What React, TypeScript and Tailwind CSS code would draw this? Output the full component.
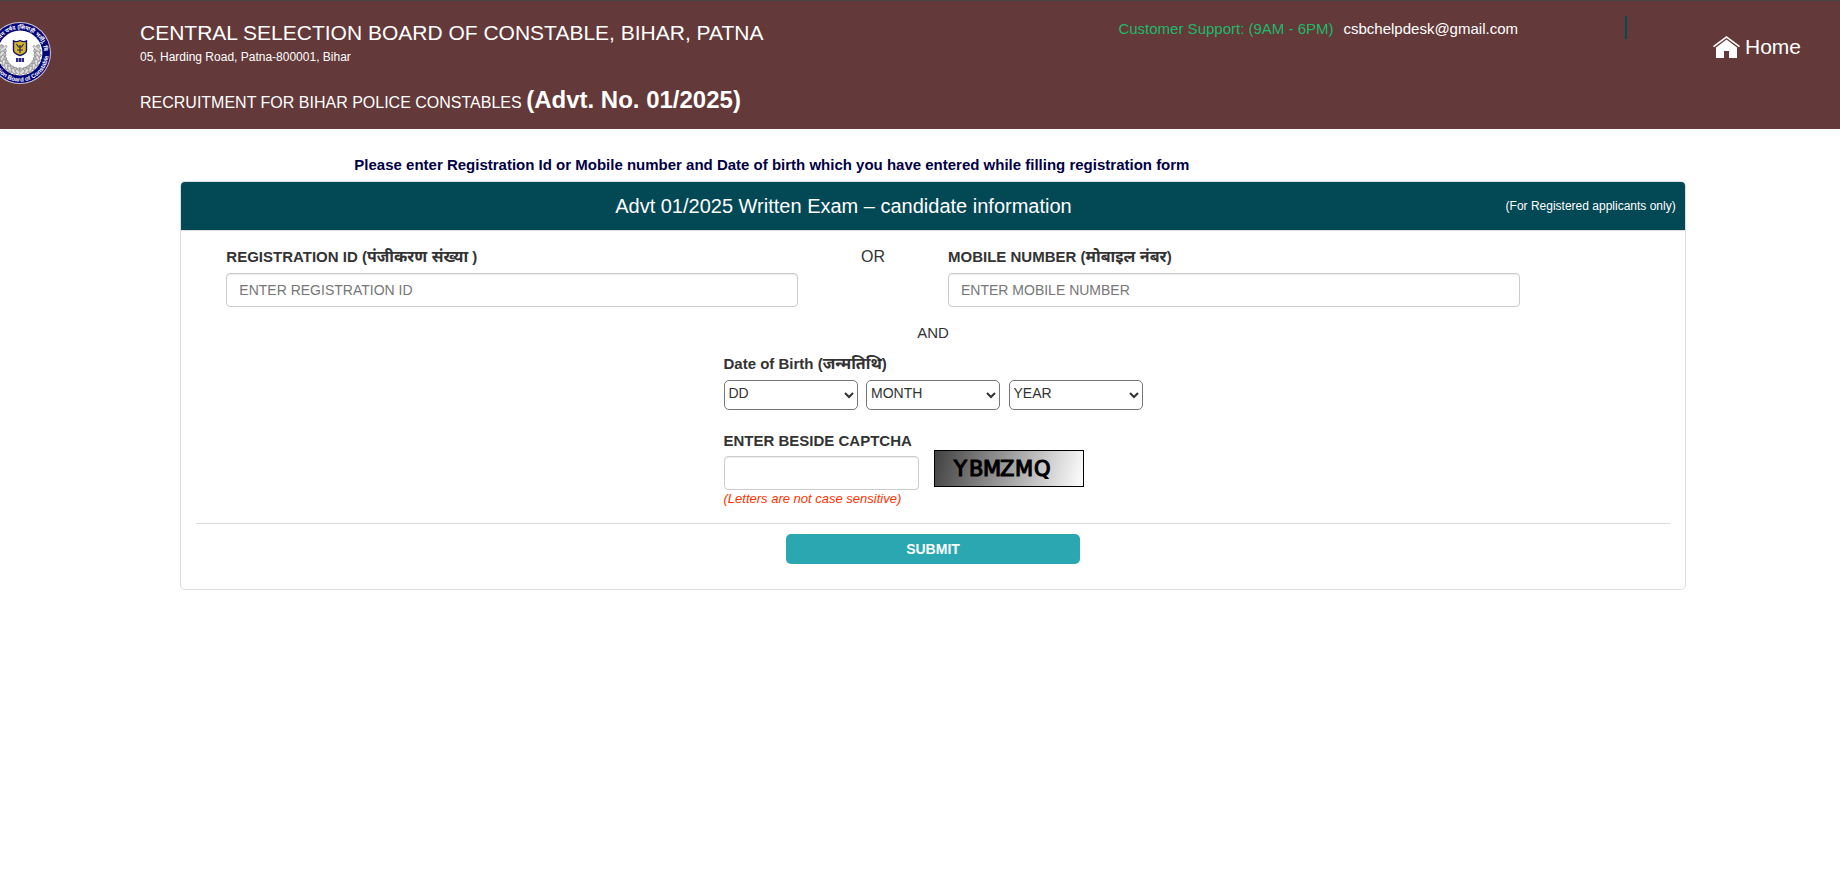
import { useState } from "react";
import type { ReactNode } from "react";

const MONTHS = ["JANUARY", "FEBRUARY", "MARCH", "APRIL", "MAY", "JUNE", "JULY", "AUGUST", "SEPTEMBER", "OCTOBER", "NOVEMBER", "DECEMBER"];
const DAYS = Array.from({ length: 31 }, (_, i) => String(i + 1));
const YEARS = Array.from({ length: 40 }, (_, i) => String(2007 - i));

const LEAVES = [0, 1, 2, 3, 4, 5, 6, 7];

function Emblem() {
  return (
    <svg viewBox="0 0 62 62" className="size-[62px] shrink-0" role="img" aria-label="Board emblem">
      <defs>
        <path id="ring-top" d="M 7 31 A 24 24 0 0 1 55 31" />
        <path id="ring-bottom" d="M 2.4 31 A 28.6 28.6 0 0 0 59.6 31" />
      </defs>
      <circle cx="31" cy="31" r="31" fill="#c9c6d4" />
      <circle cx="31" cy="31" r="30" fill="#05057a" />
      <circle cx="31" cy="31" r="22.4" fill="#ffffff" />
      <g fill="#ffffff" fontWeight="700" textAnchor="middle">
        <text fontSize="5.5"><textPath href="#ring-top" startOffset="50%">केन्द्रीय चयन पर्षद (सिपाही भर्ती), बिहार</textPath></text>
        <text fontSize="6"><textPath href="#ring-bottom" startOffset="50%">Selection Board of Constable</textPath></text>
      </g>
      {[1, -1].map((side) => (
        <g key={side} transform={side === 1 ? undefined : "translate(62 0) scale(-1 1)"}>
          <path d="M31 51 C20 51 12 42 13.5 25" fill="none" stroke="#777" strokeWidth="1" />
          {LEAVES.map((i) => {
            const deg = 100 + i * 14;
            const a = (deg * Math.PI) / 180;
            const x = 31 + 17.5 * Math.cos(a);
            const y = 32 + 17.5 * Math.sin(a);
            return (
              <g key={i} transform={`translate(${x} ${y}) rotate(${deg})`}>
                <ellipse rx="4.6" ry="1.8" fill="#c2c2c2" stroke="#6f6f6f" strokeWidth="0.5" transform="rotate(40)" />
                <ellipse rx="4.6" ry="1.5" fill="#e0e0e0" stroke="#7d7d7d" strokeWidth="0.5" transform="rotate(125)" />
              </g>
            );
          })}
        </g>
      ))}
      <path d="M24.5 19 q3 1.5 6.5 -0.5 q3.5 2 6.5 0.5 v9 q0 3.5 -6.5 5.5 q-6.5 -2 -6.5 -5.5 z" fill="#d8b52c" stroke="#15156e" strokeWidth="1.4" />
      <path d="M27.5 22 l2 3 h3 l2 -3 M31 23 v8 M28 28 h6" fill="none" stroke="#2b2a55" strokeWidth="1.2" />
      <path d="M27 36 h8 v4 h-8 z" fill="#2a2a86" />
      <path d="M29.5 36 v4 M32.5 36 v4" stroke="#d5d5ea" strokeWidth="0.6" />
    </svg>
  );
}

function HomeIcon() {
  return (
    <svg viewBox="0 0 27 22" className="h-[22px] w-[27px]" fill="#ffffff" aria-hidden="true">
      <path d="M13.5 0 L27 10 L26 11.3 L13.5 1.9 L1 11.3 L0 10 Z" />
      <path d="M13.5 3.6 L24 11.4 V22 H16 V15 H11 V22 H3 V11.4 Z" />
    </svg>
  );
}

function CaptchaImage() {
  return (
    <svg viewBox="0 0 150 37" className="h-[37px] w-[150px]" role="img" aria-label="Captcha">
      <defs>
        <linearGradient id="captcha-shade" x1="0" y1="0" x2="146" y2="36" gradientUnits="userSpaceOnUse">
          <stop offset="0" stopColor="#404040" />
          <stop offset="1" stopColor="#fbfbfb" />
        </linearGradient>
      </defs>
      <rect x="0.5" y="0.5" width="149" height="36" fill="url(#captcha-shade)" stroke="#000000" />
      <g fontFamily="'DejaVu Sans', sans-serif" fontSize="21" fill="#000000" stroke="#000000" strokeWidth="1.2">
        <text x="20" y="26">Y</text>
        <text x="35" y="26">B</text>
        <text x="49" y="26">M</text>
        <text x="66" y="26">Z</text>
        <text x="81" y="26">M</text>
        <text x="100" y="26">Q</text>
      </g>
    </svg>
  );
}

function TextField({ id, label, placeholder }: { id: string; label: ReactNode; placeholder: string }) {
  const [value, setValue] = useState("");
  return (
    <div className="flex flex-col gap-1.5">
      <label htmlFor={id} className="text-[15px] leading-[21px] font-bold">{label}</label>
      <input
        id={id}
        type="text"
        value={value}
        onChange={(e) => setValue(e.target.value)}
        placeholder={placeholder}
        className="h-[34px] w-full rounded-sm border border-[#cccccc] bg-white px-3 text-[14px] shadow-[inset_0_1px_1px_rgba(0,0,0,0.075)] placeholder:text-[#777777]"
      />
    </div>
  );
}

function DateSelect({ label, options }: { label: string; options: string[] }) {
  return (
    <select
      aria-label={label}
      defaultValue=""
      className="h-[30px] w-[134px] rounded-[5px] border border-[#767676] bg-white pb-1 text-[14px]"
    >
      <option value="">{label}</option>
      {options.map((o) => (
        <option key={o} value={o}>{o}</option>
      ))}
    </select>
  );
}

export default function App() {
  return (
    <div className="font-['Liberation_Sans','Noto_Sans',sans-serif] text-[#333333]">
      <header className="flex items-start border-t border-[#444444] bg-[#633939] pr-[39px] pb-2.5 text-white">
        <div className="-ml-[11px] w-[151px] shrink-0 pt-[21px]">
          <Emblem />
        </div>
        <div className="grow pt-[18px]">
          <h1 className="text-[21px] leading-7">CENTRAL SELECTION BOARD OF CONSTABLE, BIHAR, PATNA</h1>
          <p className="text-[12px] leading-5">05, Harding Road, Patna-800001, Bihar</p>
          <h2 className="mt-[17px] text-[16px] leading-8">
            RECRUITMENT FOR BIHAR POLICE CONSTABLES <b className="text-[24px]">(Advt. No. 01/2025)</b>
          </h2>
        </div>
        <p className="flex gap-2.5 pt-[18px] text-[15px] leading-5">
          <span className="text-[#1fb86c]">Customer Support: (9AM - 6PM)</span>
          <a href="mailto:csbchelpdesk@gmail.com">csbchelpdesk@gmail.com</a>
        </p>
        <div className="mt-[15px] ml-[107px] h-[23px] w-0.5 bg-[#034a57]" />
        <a href="#home" className="mt-[34px] ml-[86px] flex items-center gap-[5px] text-[21px] leading-6">
          <HomeIcon />
          Home
        </a>
      </header>

      <main className="mx-[8.3333%] pt-[26px] pr-px pl-[27px]">
        <p className="pl-[174px] text-[15px] leading-5 font-bold text-[#000044]">
          Please enter Registration Id or Mobile number and Date of birth which you have entered while filling registration form
        </p>
        <form onSubmit={(e) => e.preventDefault()} className="mt-1.5 rounded-[5px] border border-[#dddddd] pb-[25px]">
          <div className="flex h-[49px] items-center rounded-t-[4px] border-b border-[#dddddd] bg-[#034855] text-white">
            <h3 className="grow text-center text-[20px]">Advt 01/2025 Written Exam – candidate information</h3>
            <span className="pr-[9px] text-[12px]">(For Registered applicants only)</span>
          </div>

          <div className="grid grid-cols-[1fr_150px_1fr] pt-[15px] pr-[165px] pl-[45px]">
            <TextField
              id="registration"
              label={<>REGISTRATION ID (<span className="text-[16px]">पंजीकरण संख्या</span> )</>}
              placeholder="ENTER REGISTRATION ID"
            />
            <span className="text-center text-[16px] leading-[21px]">OR</span>
            <TextField
              id="mobile"
              label={<>MOBILE NUMBER (<span className="text-[16px]">मोबाइल नंबर</span>)</>}
              placeholder="ENTER MOBILE NUMBER"
            />
          </div>

          <p className="pt-4 text-center text-[15px] leading-5">AND</p>

          <div className="mx-auto w-[419px]">
            <fieldset className="mt-2.5">
              <legend className="text-[15px] leading-[21px] font-bold">
                Date of Birth (<span className="text-[16px]">जन्मतिथि</span>)
              </legend>
              <div className="mt-1.5 flex justify-between">
                <DateSelect label="DD" options={DAYS} />
                <DateSelect label="MONTH" options={MONTHS} />
                <DateSelect label="YEAR" options={YEARS} />
              </div>
            </fieldset>
            <label htmlFor="captcha" className="mt-5 block text-[15px] leading-[21px] font-bold">ENTER BESIDE CAPTCHA</label>
            <div className="flex items-end gap-[15px]">
              <input
                id="captcha"
                type="text"
                className="mt-[5px] h-[34px] w-[195px] rounded-sm border border-[#cccccc] bg-white px-3 text-[14px] shadow-[inset_0_1px_1px_rgba(0,0,0,0.075)]"
              />
              <div className="-mt-2 pb-[3px]">
                <CaptchaImage />
              </div>
            </div>
            <p className="text-[13px] leading-[18px] text-[#ff3300] italic">(Letters are not case sensitive)</p>
          </div>

          <div className="mx-[15px] mt-[15px] border-t border-[#dddddd] pt-2.5 text-center">
            <button type="submit" className="h-[30px] w-1/5 rounded-[5px] bg-[#2ba7b1] text-[14px] font-bold text-white">SUBMIT</button>
          </div>
        </form>
      </main>
    </div>
  );
}
